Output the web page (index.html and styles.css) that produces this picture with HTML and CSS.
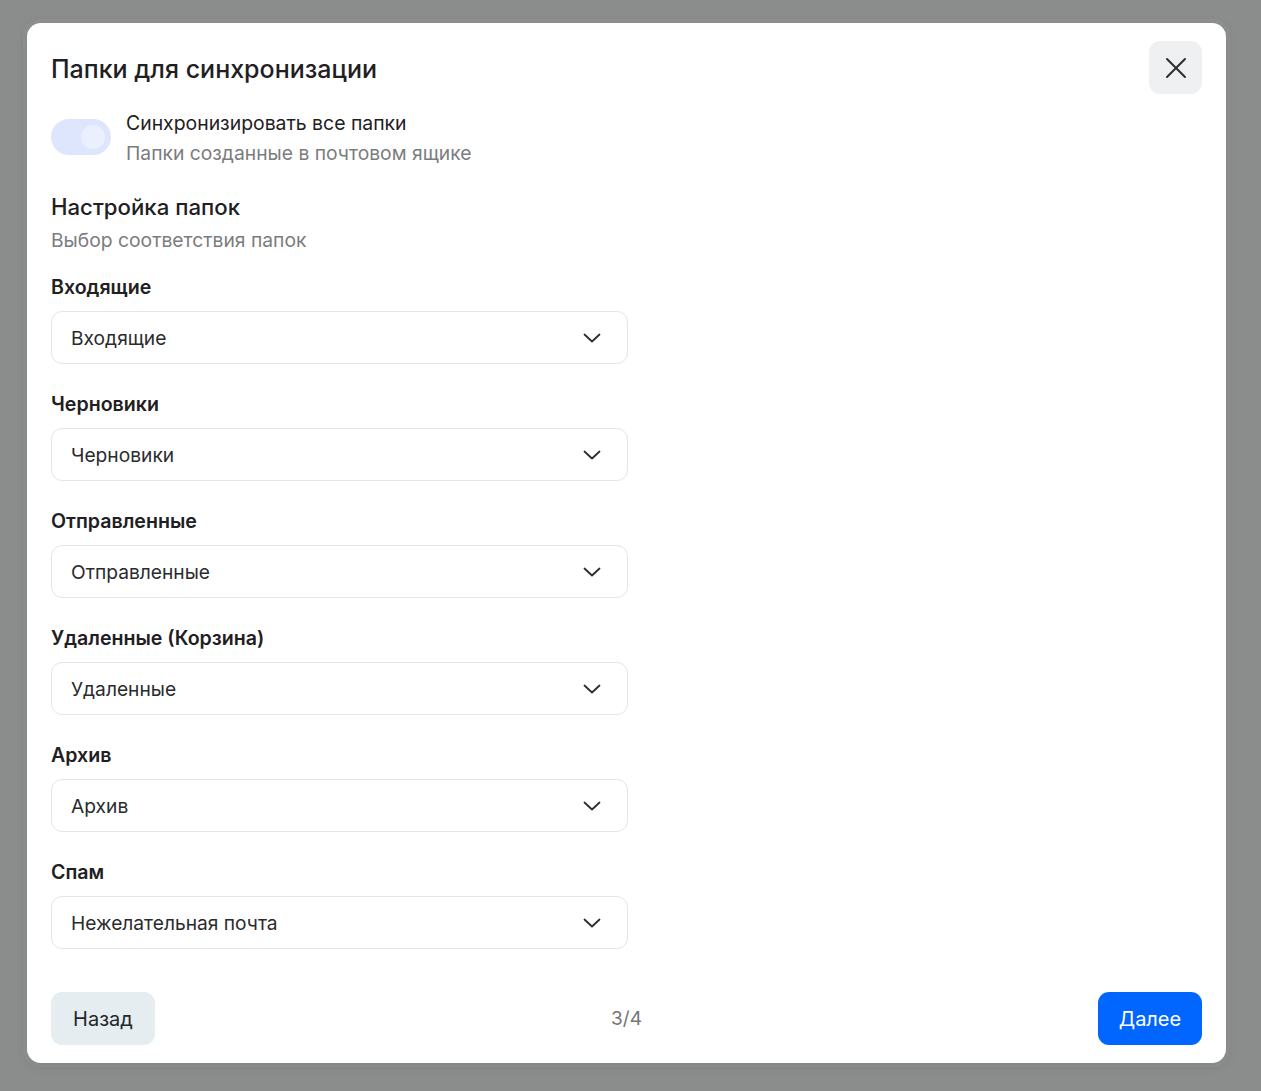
FILE: index.html
```html
<!DOCTYPE html>
<html>
<head>
  <meta charset='utf-8'>
  <title>Папки для синхронизации</title>
  <meta name='viewport' content='width=device-width, initial-scale=1'>
  <link rel="stylesheet" href="styles.css">
</head>
<body>

  <section class="modal">
    <header class="modal-head">
      <h1>Папки для синхронизации</h1>
      <button class="close" type="button" aria-label="Закрыть">
        <svg width="22" height="22" viewBox="0 0 22 22"><path d="M2 2L20 20M20 2L2 20" stroke="#2b2d30" stroke-width="2" stroke-linecap="round"/></svg>
      </button>
    </header>

    <div class="sync-all">
      <span class="toggle"><span class="knob"></span></span>
      <div>
        <div class="sync-title">Синхронизировать все папки</div>
        <div class="muted">Папки созданные в почтовом ящике</div>
      </div>
    </div>

    <h2>Настройка папок</h2>
    <div class="muted sub">Выбор соответствия папок</div>

    <div class="fields">
      <div class="field">
        <label>Входящие</label>
        <div class="select">Входящие <svg class="chev" width="18" height="10" viewBox="0 0 18 10"><path d="M1.5 1.5L9 8.5L16.5 1.5" fill="none" stroke="#2b2d30" stroke-width="1.8" stroke-linecap="round" stroke-linejoin="round"/></svg></div>
      </div>
      <div class="field">
        <label>Черновики</label>
        <div class="select">Черновики <svg class="chev" width="18" height="10" viewBox="0 0 18 10"><path d="M1.5 1.5L9 8.5L16.5 1.5" fill="none" stroke="#2b2d30" stroke-width="1.8" stroke-linecap="round" stroke-linejoin="round"/></svg></div>
      </div>
      <div class="field">
        <label>Отправленные</label>
        <div class="select">Отправленные <svg class="chev" width="18" height="10" viewBox="0 0 18 10"><path d="M1.5 1.5L9 8.5L16.5 1.5" fill="none" stroke="#2b2d30" stroke-width="1.8" stroke-linecap="round" stroke-linejoin="round"/></svg></div>
      </div>
      <div class="field">
        <label>Удаленные (Корзина)</label>
        <div class="select">Удаленные <svg class="chev" width="18" height="10" viewBox="0 0 18 10"><path d="M1.5 1.5L9 8.5L16.5 1.5" fill="none" stroke="#2b2d30" stroke-width="1.8" stroke-linecap="round" stroke-linejoin="round"/></svg></div>
      </div>
      <div class="field">
        <label>Архив</label>
        <div class="select">Архив <svg class="chev" width="18" height="10" viewBox="0 0 18 10"><path d="M1.5 1.5L9 8.5L16.5 1.5" fill="none" stroke="#2b2d30" stroke-width="1.8" stroke-linecap="round" stroke-linejoin="round"/></svg></div>
      </div>
      <div class="field">
        <label>Спам</label>
        <div class="select">Нежелательная почта <svg class="chev" width="18" height="10" viewBox="0 0 18 10"><path d="M1.5 1.5L9 8.5L16.5 1.5" fill="none" stroke="#2b2d30" stroke-width="1.8" stroke-linecap="round" stroke-linejoin="round"/></svg></div>
      </div>
    </div>

    <footer class="modal-foot">
      <button class="btn btn-back" type="button">Назад</button>
      <span class="step">3/4</span>
      <button class="btn btn-next" type="button">Далее</button>
    </footer>
  </section>

</body>
</html>
```

FILE: styles.css
```css
html, body {
  margin: 0;
  height: 100%;
}
body {
  background: #8b8c8c;
  font-family: Inter, "Noto Sans", sans-serif;
  color: #1f2022;
  padding: 23px 35px 28px 27px;
  box-sizing: border-box;
}
.modal {
  background: #fff;
  border-radius: 14px;
  padding: 18px 24px 18px 24px;
  box-shadow: 0 0 0 4px rgba(255, 255, 255, 0.05), 0 2px 12px rgba(0, 0, 0, 0.12);
  height: 100%;
  box-sizing: border-box;
  display: flex;
  flex-direction: column;
}
.modal-head {
  display: flex;
  justify-content: space-between;
  align-items: flex-start;
}
.modal-head h1 {
  margin: 14px 0 0 0;
  font-size: 25px;
  font-weight: 500;
  line-height: 28px;
}
.close {
  width: 53px;
  height: 53px;
  border: none;
  border-radius: 11px;
  background: #eff0f2;
  display: flex;
  align-items: center;
  justify-content: center;
  cursor: pointer;
}
.sync-all {
  display: flex;
  gap: 15px;
  margin-top: 14px;
}
.toggle {
  width: 60px;
  height: 36px;
  border-radius: 18px;
  background: #dde6fd;
  display: flex;
  align-items: center;
  justify-content: flex-end;
  padding: 0 6px;
  box-sizing: border-box;
  margin-top: 11px;
}
.knob {
  width: 24px;
  height: 24px;
  border-radius: 50%;
  background: #ebf0fe;
}
.sync-title {
  font-size: 19.4px;
  line-height: 30px;
}
.muted {
  color: #7b7c7e;
  font-size: 19.3px;
  line-height: 30px;
}
h2 {
  margin: 24px 0 0 0;
  font-size: 22.2px;
  font-weight: 500;
  line-height: 30px;
}
.sub {
  margin-top: 3px;
}
.fields {
  display: flex;
  flex-direction: column;
  gap: 28px;
  margin-top: 20px;
}
.field label {
  display: block;
  font-size: 19.6px;
  font-weight: 600;
  line-height: 24px;
  margin-bottom: 12px;
}
.select {
  width: 577px;
  height: 53px;
  box-sizing: border-box;
  border: 1px solid #e4e5e7;
  border-radius: 11px;
  padding: 0 26px 0 19px;
  display: flex;
  align-items: center;
  justify-content: space-between;
  font-size: 19.2px;
  color: #2a2b2d;
}
.chev {
  margin-top: 1px;
}
.modal-foot {
  margin-top: auto;
  display: flex;
  justify-content: space-between;
  align-items: center;
}
.btn {
  height: 53px;
  width: 104px;
  border: none;
  border-radius: 11px;
  font-family: inherit;
  font-size: 20px;
  cursor: pointer;
}
.btn-back {
  background: #e6edf0;
  color: #24272a;
}
.btn-next {
  background: #0066ff;
  color: #fff;
}
.step {
  color: #737476;
  font-size: 19px;
}
```
